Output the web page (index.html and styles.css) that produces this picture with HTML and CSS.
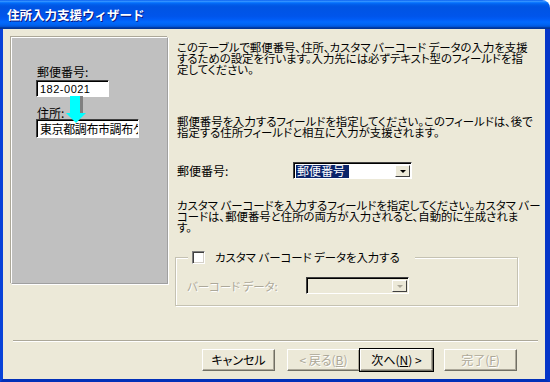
FILE: index.html
```html
<!DOCTYPE html>
<html lang="ja">

<head>
    <meta charset="UTF-8">
    <title>住所入力支援ウィザード</title>
    <link rel="stylesheet" href="styles.css">
</head>

<body>
    <div class="window">
        <div class="titlebar">住所入力支援ウィザード</div>
        <div class="client">
            <div class="main">
                <div class="panel">
                    <div class="panel-label first">郵便番号:</div>
                    <div class="textbox zip">182-0021</div>
                    <div class="panel-label">住所:</div>
                    <div class="textbox addr">東京都調布市調布ケ丘</div>
                    <!-- 郵便番号から住所への矢印 -->
                    <svg class="arrow" width="22" height="28" viewBox="0 0 22 28">
                        <rect x="14" y="0" width="3" height="17" fill="#808080" />
                        <rect x="4" y="0" width="10" height="17" fill="#00ffff" />
                        <polygon points="0,17 20,17 10,27" fill="#00ffff" />
                    </svg>
                </div>
                <div class="content">
                    <p class="para p1">このテーブルで郵便番号、住所、カスタマ バーコード データの入力を支援<br>するための設定を行います。入力先には必ずテキスト型のフィールドを指<br>定してください。</p>
                    <p class="para p2">郵便番号を入力するフィールドを指定してください。このフィールドは、後で<br>指定する住所フィールドと相互に入力が支援されます。</p>
                    <div class="field-row">
                        <span class="field-label">郵便番号:</span>
                        <div class="combo">
                            <span class="combo-value"><span class="selected">郵便番号</span></span>
                            <span class="combo-btn"><span class="tri"></span></span>
                        </div>
                    </div>
                    <p class="para p3">カスタマ バーコードを入力するフィールドを指定してください。カスタマ バー<br>コードは、郵便番号と住所の両方が入力されると、自動的に生成されま<br>す。</p>
                    <fieldset class="group">
                        <legend class="group-legend">
                            <span class="checkbox"></span>
                            <span>カスタマ バーコード データを入力する</span>
                        </legend>
                        <div class="field-row inner">
                            <span class="field-label disabled">バーコード データ:</span>
                            <div class="combo off">
                                <span class="combo-value"></span>
                                <span class="combo-btn"><span class="tri"></span></span>
                            </div>
                        </div>
                    </fieldset>
                </div>
            </div>
            <div class="separator"></div>
            <div class="footer">
                <button class="btn cancel">キャンセル</button>
                <button class="btn" disabled>&lt; 戻る(<u>B</u>)</button>
                <button class="btn default">次へ(<u>N</u>) &gt;</button>
                <button class="btn finish" disabled>完了(<u>F</u>)</button>
            </div>
        </div>
    </div>
</body>

</html>
```

FILE: styles.css
```css
body {
    margin: 0;
    background: #fff;
    font-family: "Noto Sans CJK JP", "Liberation Sans", sans-serif;
    font-size: 11.4px;
    color: #000;
}

.window {
    width: 550px;
    height: 382px;
    display: flex;
    flex-direction: column;
}

.titlebar {
    height: 29px;
    box-sizing: border-box;
    padding: 6px 0 0 7px;
    border-top-right-radius: 8px;
    background: linear-gradient(to bottom, #0058ee 0%, #3a93ff 4%, #288eff 6%, #127dff 8%, #036ffc 10%, #0262ee 14%, #0057e5 20%, #0054e3 24%, #0055eb 56%, #005bf5 66%, #026afe 76%, #0062ef 86%, #0052d6 92%, #0040ab 94%, #003092 100%);
    color: #fff;
    font-size: 12.5px;
    font-weight: bold;
    line-height: 17px;
    text-shadow: 1px 1px #0a1883;
}

.client {
    flex: 1;
    display: flex;
    flex-direction: column;
    background: #ece9d8;
    border-left: 3px solid #0842d8;
    border-right: 5px solid #0535c8;
    border-bottom: 3px solid #0230b8;
}

.main {
    display: flex;
    height: 311px;
    box-sizing: border-box;
    padding: 8px 0 0 8px;
}

/* 左側の説明図 */
.panel {
    position: relative;
    width: 157px;
    height: 247px;
    box-sizing: border-box;
    padding-left: 24px;
    background: #c0c0c0;
    border: 1px solid;
    border-color: #fff #a0a0a0 #a0a0a0 #fff;
    box-shadow: -1px -1px 0 #aca899, 1px 1px 0 #fff;
}

.panel-label {
    margin: 10px 0 0 1px;
    line-height: 12px;
    font-size: 12px;
}

.panel-label.first {
    margin-top: 28px;
}

.textbox {
    box-sizing: border-box;
    background: #fff;
    border: 1px solid;
    border-color: #404040 #fff #fff #404040;
    box-shadow: inset 1px 1px 0 #000;
    padding: 1px 0 0 3px;
    white-space: nowrap;
    overflow: hidden;
    line-height: 14px;
}

.textbox.zip {
    width: 73px;
    height: 17px;
    margin-top: 2px;
    font-family: "Liberation Sans", sans-serif;
    font-size: 11px;
    letter-spacing: 0.5px;
}

.textbox.addr {
    width: 103px;
    height: 19px;
    padding-top: 2px;
    font-size: 12px;
    letter-spacing: -0.4px;
}

.arrow {
    position: absolute;
    left: 54px;
    top: 58px;
}

.content {
    margin-left: 9px;
    width: 362px;
}

.para {
    margin: 0;
    line-height: 11px;
    white-space: nowrap;
    font-feature-settings: "palt";
}

.p1 {
    margin-top: 5px;
}

.p2 {
    margin-top: 41px;
}

.p3 {
    margin-top: 21px;
}

.field-row {
    display: flex;
    align-items: center;
    margin-top: 24px;
    height: 17px;
}

.field-label {
    width: 116px;
    line-height: 12px;
    font-size: 12px;
    font-feature-settings: "palt";
}

.combo {
    display: flex;
    width: 119px;
    height: 17px;
    box-sizing: border-box;
    background: #fff;
    border: 1px solid;
    border-color: #404040 #fff #fff #404040;
    box-shadow: inset 1px 1px 0 #000;
    padding: 2px 1px 1px 2px;
}

.combo-value {
    flex: 1;
    line-height: 12px;
    font-size: 12px;
}

.selected {
    display: inline-block;
    background: #0a246a;
    color: #fff;
    padding: 0 4px 0 1px;
    height: 13px;
    margin-top: -1px;
}

.combo-btn {
    display: flex;
    align-items: center;
    justify-content: center;
    width: 15px;
    height: 12px;
    box-sizing: border-box;
    background: #ece9d8;
    border: 1px solid;
    border-color: #fff #404040 #404040 #fff;
}

.tri {
    width: 0;
    height: 0;
    border-left: 3px solid transparent;
    border-right: 3px solid transparent;
    border-top: 3px solid #000;
}

.combo.off {
    width: 103px;
    background: #ece9d8;
}

.combo.off .tri {
    border-top-color: #aca899;
}

.group {
    margin: 18px 0 0 -2px;
    width: 343px;
    box-sizing: border-box;
    padding: 0 0 11px 11px;
    border: 1px solid #c5c2b2;
    box-shadow: inset 1px 1px 0 #fff, 1px 1px 0 #fff;
}

.group-legend {
    display: flex;
    align-items: center;
    margin-left: 1px;
    padding: 0 15px 0 4px;
    height: 13px;
    line-height: 13px;
    background: #ece9d8;
    font-feature-settings: "palt";
}

.checkbox {
    width: 13px;
    height: 13px;
    box-sizing: border-box;
    margin-right: 10px;
    background: #fff;
    border: 1px solid;
    border-color: #808080 #fff #fff #808080;
    box-shadow: inset 1px 1px 0 #404040, inset -1px -1px 0 #d4d0c8;
}

.field-row.inner {
    margin-top: 13px;
}

.field-label.disabled {
    width: 119px;
    font-size: 11.4px;
    color: #aca899;
    text-shadow: 1px 1px #fff;
}

.separator {
    margin: 0 7px 0 10px;
    height: 1px;
    border-top: 1px solid #aca899;
    background: #fff;
}

.footer {
    display: flex;
    justify-content: flex-end;
    padding: 7px 28px 0 0;
}

.btn {
    width: 73px;
    height: 22px;
    padding: 0;
    background: #ece9d8;
    border: 1px solid;
    border-color: #fff #716f64 #716f64 #fff;
    box-shadow: inset -1px -1px 0 #aca899;
    font-family: "Noto Sans CJK JP", "Liberation Sans", sans-serif;
    font-size: 12px;
    line-height: 18px;
    color: #000;
    font-feature-settings: "palt";
}

.btn:disabled {
    color: #aca899;
    text-shadow: 1px 1px #fff;
}

.btn.cancel {
    margin-right: 12px;
}

.btn.default {
    outline: 1px solid #000;
    outline-offset: 0;
    margin-right: 11px;
}
```
